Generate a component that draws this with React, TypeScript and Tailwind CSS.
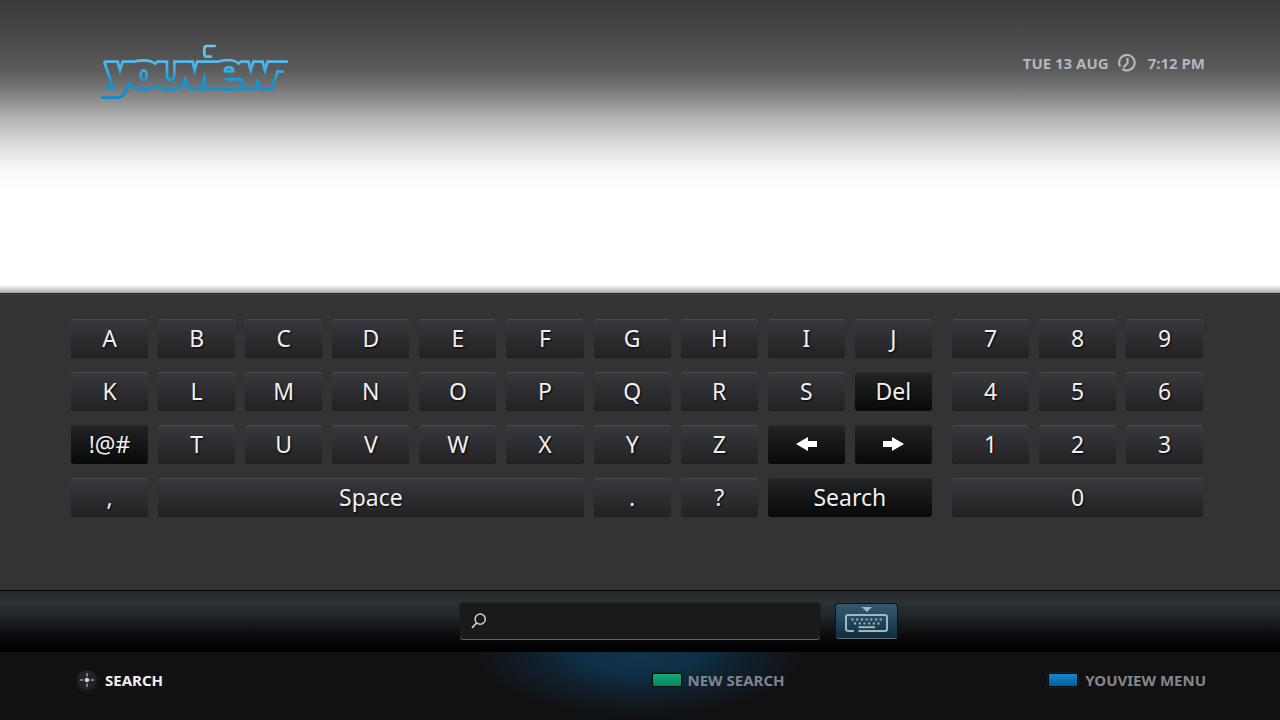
import type { ReactNode } from "react";

type Key = { label: string; icon?: ReactNode; dark?: boolean; span?: string };

function Arrow({ flip = false }: { flip?: boolean }) {
  return (
    <svg viewBox="0 0 21 14" className={flip ? "h-[14px] w-[21px] rotate-180" : "h-[14px] w-[21px]"} aria-hidden="true">
      <path d="M0 7 12 0V4H21V10H12V14Z" fill="#fff" />
    </svg>
  );
}

const letterKeys: Key[] = [
  ..."ABCDEFGHIJKLMNOPQRS".split("").map((label) => ({ label })),
  { label: "Del", dark: true },
  { label: "!@#", dark: true },
  ..."TUVWXYZ".split("").map((label) => ({ label })),
  { label: "Left", dark: true, icon: <Arrow /> },
  { label: "Right", dark: true, icon: <Arrow flip /> },
  { label: "," },
  { label: "Space", span: "col-span-5" },
  { label: "." },
  { label: "?" },
  { label: "Search", dark: true, span: "col-span-2" },
];

const numberKeys: Key[] = [
  ..."789456123".split("").map((label) => ({ label })),
  { label: "0", span: "col-span-3" },
];

function KeyButton({ label, icon, dark, span = "" }: Key) {
  const tone = dark
    ? "bg-linear-to-b from-[#222426] to-[#090909] shadow-[inset_0_1px_0_#2c2c2d]"
    : "bg-linear-to-b from-[#38393e] to-[#222224] shadow-[inset_0_1px_0_#4a4a4d,inset_0_-1px_0_#1f1f20]";
  return (
    <button
      type="button"
      aria-label={label}
      className={`flex h-[39px] items-center justify-center rounded-[3px] pb-px text-[23px] leading-none text-[#f0f0f0] [text-shadow:1px_1px_2px_#000] ${tone} ${span}`}
    >
      {icon ?? label}
    </button>
  );
}

function Logo() {
  return (
    <svg viewBox="0 0 630 225" className="h-[75px] w-[210px]" role="img" aria-label="youview">
      <defs>
        <linearGradient id="logo" gradientUnits="userSpaceOnUse" x1="0" y1="30" x2="0" y2="190">
          <stop offset="0" stopColor="#74c8f0" />
          <stop offset=".35" stopColor="#50b8ec" />
          <stop offset=".7" stopColor="#0a98dc" />
          <stop offset="1" stopColor="#088bd2" />
        </linearGradient>
      </defs>
      <g fill="none" stroke="url(#logo)" strokeWidth="8" strokeLinecap="round" strokeLinejoin="miter" strokeMiterlimit="8">
        <path d="M374 33H351Q343 33 343 41V56Q343 65 351 65H363" />
        <path d="M36 188H84Q99 187 105 171L117 147Q129 163 162 163Q188 163 201 153Q214 163 243 163Q270 163 277 152L286 133L297 162H336L343 133L347 162H376Q386 161 390 159Q402 164 418 164Q432 164 440 162H495L502 141L509 162H546L562 110H578" />
        <path d="M51 157H69L44 85Q42 80 48 80H83L90 107L98 80H132Q145 76 161 76Q184 77 196 86L202 80H231V120Q231 134 242 134Q253 134 253 120V80H308L314 107L321 80H384Q397 75 416 75Q437 76 446 86L452 80H475L482 107L490 80H518L525 107L533 80H591" />
        <path d="M408 133H454L462 161" />
        <path d="M404 109Q405 97 417 97Q430 97 430 109Z" strokeLinejoin="round" />
        <ellipse cx="161" cy="121" rx="9" ry="15" />
      </g>
    </svg>
  );
}

function Clock() {
  return (
    <svg viewBox="0 0 18 18" className="size-[18px]" fill="none" stroke="currentColor" strokeWidth="2.2" aria-hidden="true">
      <path d="M4.2 14.8A7.7 7.7 0 1 0 2.2 12.5M9.5 4V9L5.500 13.500" />
    </svg>
  );
}

function Swatch({ tone }: { tone: string }) {
  return (
    <span className="flex rounded-[4px] border border-[#1b1e21] bg-[#080b0d] p-px">
      <span className={`h-3 w-7 rounded-[1px] ${tone}`} />
    </span>
  );
}

export default function App() {
  return (
    <div className="flex min-h-screen flex-col bg-[#111] font-['Noto_Sans',sans-serif]">
      <header className="relative flex grow items-start justify-between bg-[linear-gradient(180deg,#393939_0px,#4b4b4b_40px,#5b5b5b_70px,#6c6c6c_82px,#898989_98px,#acacac_115px,#cdcdcd_134px,#e5e5e5_152px,#f8f8f8_170px,#fff_190px)] pr-[75px] pl-[90px]">
        <div className="pt-[35px]">
          <Logo />
        </div>
        <div className="flex items-center gap-[9px] pt-[51px] text-[15px] leading-6 font-bold text-[#b5b6bf]">
          <time>TUE 13 AUG</time>
          <Clock />
          <time className="pl-[3px]">7:12 PM</time>
        </div>
        <div className="absolute inset-x-0 bottom-0 h-2 bg-linear-to-b from-transparent to-black/35" />
      </header>

      <main className="border-t border-[#222] bg-[#333] pt-[25px] pr-[77px] pb-[73px] pl-[71px] shadow-[inset_0_1px_0_#484848]">
        <div className="grid grid-cols-[861fr_251fr] gap-5">
          <div className="grid grid-cols-10 gap-x-[10px] gap-y-[14px]">
            {letterKeys.map((key) => (
              <KeyButton key={key.label} {...key} />
            ))}
          </div>
          <div className="grid grid-cols-3 gap-x-[10px] gap-y-[14px]">
            {numberKeys.map((key) => (
              <KeyButton key={key.label} {...key} />
            ))}
          </div>
        </div>
      </main>

      <section className="flex h-[62px] items-center justify-center gap-4 border-t border-black bg-[linear-gradient(180deg,#25292c_0%,#2d3235_18%,#202528_42%,#0d0f10_68%,#020202_90%,#000_100%)] pb-[2px] pl-[77px]">
        <label className="flex h-[36px] w-[360px] items-center rounded-[3px] bg-[#1a1a1a] pl-[11px] shadow-[0_1px_0_#626262,0_0_2px_#111]">
          <svg viewBox="0 0 16 16" className="size-4" fill="none" stroke="#d0d0d4" aria-hidden="true">
            <circle cx="9.2" cy="6.2" r="5.1" strokeWidth="1.5" />
            <path d="M5.5 10 1 14.8" strokeWidth="1.7" />
          </svg>
          <input aria-label="Search" className="min-w-0 grow bg-transparent px-2 text-lg text-white outline-none" />
        </label>
        <button
          type="button"
          aria-label="Keyboard"
          className="flex h-[34px] w-[61px] items-center justify-center rounded-[3px] bg-linear-to-b from-[#34586b] from-0% via-[#234a60] via-45% to-[#0f2d3e] pb-[2px] shadow-[0_1px_0_#62727c,0_0_0_1px_#0b1216]"
        >
          <svg viewBox="0 0 43 26" className="h-[26px] w-[43px]" fill="none" stroke="#a3b5c0" aria-hidden="true">
            <path d="M16.5 0H27L22 5Z" fill="#a3b5c0" stroke="none" />
            <path d="M9 24H4Q1 24 1 22V10Q1 8 3 8H40Q42 8 42 10V22Q42 24 40 24H13.5" strokeWidth="2" />
            <path d="M6.5 12.5H37" strokeWidth="2" strokeDasharray="2 2.7" />
            <path d="M9 16.500H35" strokeWidth="2" strokeDasharray="2 2.7" />
            <path d="M13.5 20.200H30" strokeWidth="2" />
          </svg>
        </button>
      </section>

      <footer className="flex h-[68px] items-start bg-[radial-gradient(ellipse_165px_64px_at_50%_0,#0e354c_0%,#0e2f45_35%,#101e28_68%,#111_100%)] pt-4 pr-[74px] pl-[75px] text-[15px] leading-6 font-bold text-[#85868b]">
        <div className="w-1/2">
          <button type="button" className="flex items-center gap-[6px] text-[#f0f0f0]">
            <svg viewBox="0 0 24 24" className="size-[24px]" aria-hidden="true">
              <circle cx="12" cy="12.500" r="11" fill="#222326" stroke="#25292d" />
              <circle cx="12" cy="12" r="10.7" fill="#222326" stroke="#080808" />
              <circle cx="12" cy="12" r="2.2" fill="#d8d8d8" />
              <path d="M12 5V8.500M12 15.500V19M5 12H8.500M15.500 12H19" stroke="#d8d8d8" />
            </svg>
            SEARCH
          </button>
        </div>
        <div className="flex w-1/2 justify-between pl-[10px]">
          <button type="button" className="flex items-center gap-[5px] text-[#7d858d]">
            <Swatch tone="bg-linear-to-b from-[#14aa7c] to-[#08835a]" />
            NEW SEARCH
          </button>
          <button type="button" className="flex items-center gap-[6px]">
            <Swatch tone="bg-linear-to-b from-[#1587cd] to-[#075e96]" />
            YOUVIEW MENU
          </button>
        </div>
      </footer>
    </div>
  );
}
